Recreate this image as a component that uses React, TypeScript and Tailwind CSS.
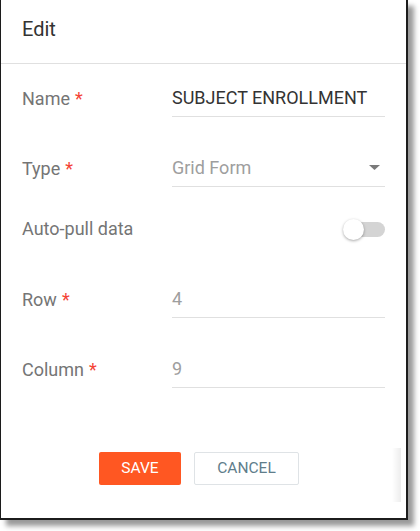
import type { ReactNode } from 'react';

interface FieldRowProps {
  label: string;
  required?: boolean;
  className?: string;
  children: ReactNode;
}

function FieldRow({ label, required, className, children }: FieldRowProps) {
  return (
    <div className={`flex items-center ${className || ''}`}>
      <div className="w-[150px] shrink-0 pb-[2px] text-[18px] text-[#757575]">
        {label}
        {required ? <span className="ml-[5px] text-[#f44336]">*</span> : null}
      </div>
      {children}
    </div>
  );
}

function TextValue({ value, muted, arrow }: { value: string; muted?: boolean; arrow?: boolean }) {
  return (
    <div className="flex-1 h-[36px] flex items-center border-b border-[#e0e0e0] pb-[3px]">
      <span className={`flex-1 text-[18px] ${muted ? 'text-[#9e9e9e]' : 'text-[#333333]'}`}>{value}</span>
      {arrow ? (
        <svg width="11" height="5" viewBox="0 0 11 5" className="mr-[5px]">
          <path d="M0 0 L11 0 L5.5 5 Z" fill="#7a7a7a" />
        </svg>
      ) : null}
    </div>
  );
}

function Toggle() {
  return (
    <div className="relative w-[42px] h-[23px] flex items-center justify-end">
      <div className="w-[35px] h-[15px] rounded-full bg-[#d4d4d4]" />
      <div className="absolute left-0 top-[1px] w-[21px] h-[21px] rounded-full bg-white shadow-[0_1px_3px_rgba(0,0,0,0.35)]" />
    </div>
  );
}

export default function App() {
  return (
    <div className="w-[420px] h-[531px] bg-white" style={{ fontFamily: 'Roboto, "Noto Sans", sans-serif' }}>
      <div className="relative w-[408px] h-[520px] bg-white border-l border-r-2 border-b-2 border-[#1c1c1c] shadow-[6px_6px_5px_rgba(0,0,0,0.4)] flex flex-col">
        <div className="h-[64px] shrink-0 border-b border-[#e0e0e0] px-[21px] pt-[16px]">
          <h2 className="text-[20px] leading-[26px] text-[#333333]">Edit</h2>
        </div>

        <div className="flex-1 flex flex-col px-[21px]">
          <FieldRow label="Name" required className="mt-[17px]">
            <TextValue value="SUBJECT ENROLLMENT" />
          </FieldRow>
          <FieldRow label="Type" required className="mt-[34px]">
            <TextValue value="Grid Form" muted arrow />
          </FieldRow>
          <FieldRow label="Auto-pull data" className="mt-[24px] h-[36px]">
            <div className="flex-1 flex justify-end">
              <Toggle />
            </div>
          </FieldRow>
          <FieldRow label="Row" required className="mt-[35px]">
            <TextValue value="4" muted />
          </FieldRow>
          <FieldRow label="Column" required className="mt-[34px]">
            <TextValue value="9" muted />
          </FieldRow>

          <div className="flex gap-[13px] pl-[77px] mt-[64px]">
            <button className="w-[82px] h-[33px] rounded-[2px] bg-[#ff5722] text-white text-[15.5px] uppercase">
              Save
            </button>
            <button className="w-[105px] h-[33px] rounded-[2px] border border-[#dfe3e6] bg-white text-[#607d8b] text-[15.5px] uppercase">
              Cancel
            </button>
          </div>
        </div>

        <div className="absolute right-[5px] top-[448px] w-[9px] h-[54px] bg-gradient-to-r from-white to-[#ededed]" />
      </div>
    </div>
  );
}
